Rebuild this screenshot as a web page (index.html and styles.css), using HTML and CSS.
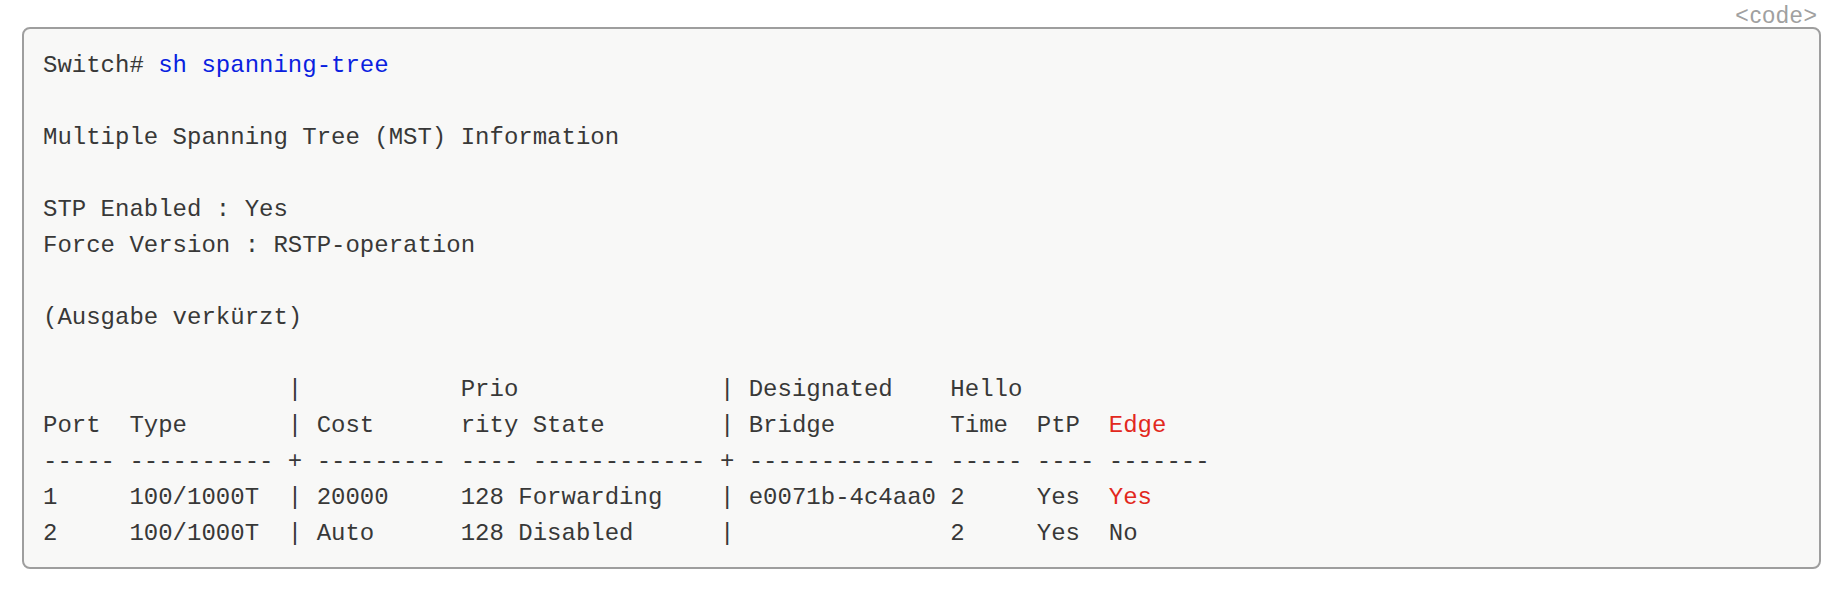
FILE: index.html
```html
<!DOCTYPE html>
<html lang="de">
<head>
<meta charset="utf-8">
<title>show spanning-tree</title>
<link rel="stylesheet" href="styles.css">
</head>
<body>
<div class="wrap">
  <div class="codeblock">
    <span class="label">&lt;code&gt;</span>
<pre class="code">Switch# <span class="cmd">sh spanning-tree</span>

Multiple Spanning Tree (MST) Information

STP Enabled : Yes
Force Version : RSTP-operation

(Ausgabe verkürzt)

                 |           Prio              | Designated    Hello
Port  Type       | Cost      rity State        | Bridge        Time  PtP  <span class="hl">Edge</span>
----- ---------- + --------- ---- ------------ + ------------- ----- ---- -------
1     100/1000T  | 20000     128 Forwarding    | e0071b-4c4aa0 2     Yes  <span class="hl">Yes</span>
2     100/1000T  | Auto      128 Disabled      |               2     Yes  No</pre>
  </div>
</div>
</body>
</html>
```

FILE: styles.css
```css
html, body {
  margin: 0;
  padding: 0;
  background: #ffffff;
}

.wrap {
  padding: 27px 19px 0 22px;
}

.codeblock {
  position: relative;
  border: 2px solid #9e9e9e;
  border-radius: 8px;
  background: #f8f8f7;
  padding: 19px 19px 15px 19px;
}

.label {
  position: absolute;
  right: 1px;
  top: -26px;
  font-family: "Liberation Sans", Arial, sans-serif;
  font-size: 23px;
  line-height: 24px;
  letter-spacing: 1px;
  color: #a0a0a0;
}

.code {
  margin: 0;
  font-family: "Liberation Mono", "Courier New", monospace;
  font-size: 24px;
  line-height: 36px;
  color: #383838;
  white-space: pre;
}

.cmd {
  color: #0a1fe0;
}

.hl {
  color: #e2281d;
}
```
